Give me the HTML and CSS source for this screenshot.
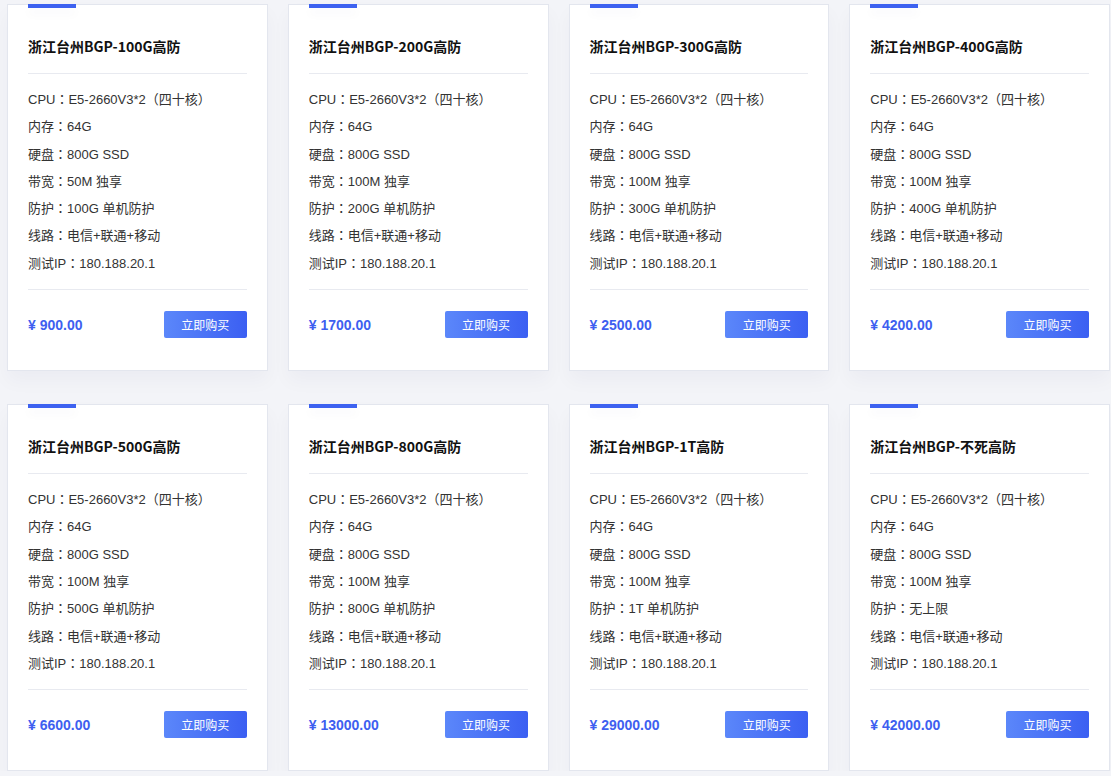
FILE: index.html
```html
<!DOCTYPE html>
<html>
  <head>
    <meta charset="utf-8" />
    <title>浙江台州BGP高防</title>
    <link rel="stylesheet" href="styles.css">
  </head>
  <body>
    <section class="products">
      <article class="card">
        <h3 class="card-title">浙江台州BGP-100G高防</h3>
        <ul class="specs">
          <li>CPU：E5-2660V3*2（四十核）</li>
          <li>内存：64G</li>
          <li>硬盘：800G SSD</li>
          <li>带宽：50M 独享</li>
          <li>防护：100G 单机防护</li>
          <li>线路：电信+联通+移动</li>
          <li>测试IP：180.188.20.1</li>
        </ul>
        <div class="card-foot">
          <span class="price">¥ 900.00</span>
          <a class="buy" href="#">立即购买</a>
        </div>
      </article>

      <article class="card">
        <h3 class="card-title">浙江台州BGP-200G高防</h3>
        <ul class="specs">
          <li>CPU：E5-2660V3*2（四十核）</li>
          <li>内存：64G</li>
          <li>硬盘：800G SSD</li>
          <li>带宽：100M 独享</li>
          <li>防护：200G 单机防护</li>
          <li>线路：电信+联通+移动</li>
          <li>测试IP：180.188.20.1</li>
        </ul>
        <div class="card-foot">
          <span class="price">¥ 1700.00</span>
          <a class="buy" href="#">立即购买</a>
        </div>
      </article>

      <article class="card">
        <h3 class="card-title">浙江台州BGP-300G高防</h3>
        <ul class="specs">
          <li>CPU：E5-2660V3*2（四十核）</li>
          <li>内存：64G</li>
          <li>硬盘：800G SSD</li>
          <li>带宽：100M 独享</li>
          <li>防护：300G 单机防护</li>
          <li>线路：电信+联通+移动</li>
          <li>测试IP：180.188.20.1</li>
        </ul>
        <div class="card-foot">
          <span class="price">¥ 2500.00</span>
          <a class="buy" href="#">立即购买</a>
        </div>
      </article>

      <article class="card">
        <h3 class="card-title">浙江台州BGP-400G高防</h3>
        <ul class="specs">
          <li>CPU：E5-2660V3*2（四十核）</li>
          <li>内存：64G</li>
          <li>硬盘：800G SSD</li>
          <li>带宽：100M 独享</li>
          <li>防护：400G 单机防护</li>
          <li>线路：电信+联通+移动</li>
          <li>测试IP：180.188.20.1</li>
        </ul>
        <div class="card-foot">
          <span class="price">¥ 4200.00</span>
          <a class="buy" href="#">立即购买</a>
        </div>
      </article>

      <article class="card">
        <h3 class="card-title">浙江台州BGP-500G高防</h3>
        <ul class="specs">
          <li>CPU：E5-2660V3*2（四十核）</li>
          <li>内存：64G</li>
          <li>硬盘：800G SSD</li>
          <li>带宽：100M 独享</li>
          <li>防护：500G 单机防护</li>
          <li>线路：电信+联通+移动</li>
          <li>测试IP：180.188.20.1</li>
        </ul>
        <div class="card-foot">
          <span class="price">¥ 6600.00</span>
          <a class="buy" href="#">立即购买</a>
        </div>
      </article>

      <article class="card">
        <h3 class="card-title">浙江台州BGP-800G高防</h3>
        <ul class="specs">
          <li>CPU：E5-2660V3*2（四十核）</li>
          <li>内存：64G</li>
          <li>硬盘：800G SSD</li>
          <li>带宽：100M 独享</li>
          <li>防护：800G 单机防护</li>
          <li>线路：电信+联通+移动</li>
          <li>测试IP：180.188.20.1</li>
        </ul>
        <div class="card-foot">
          <span class="price">¥ 13000.00</span>
          <a class="buy" href="#">立即购买</a>
        </div>
      </article>

      <article class="card">
        <h3 class="card-title">浙江台州BGP-1T高防</h3>
        <ul class="specs">
          <li>CPU：E5-2660V3*2（四十核）</li>
          <li>内存：64G</li>
          <li>硬盘：800G SSD</li>
          <li>带宽：100M 独享</li>
          <li>防护：1T 单机防护</li>
          <li>线路：电信+联通+移动</li>
          <li>测试IP：180.188.20.1</li>
        </ul>
        <div class="card-foot">
          <span class="price">¥ 29000.00</span>
          <a class="buy" href="#">立即购买</a>
        </div>
      </article>

      <article class="card">
        <h3 class="card-title">浙江台州BGP-不死高防</h3>
        <ul class="specs">
          <li>CPU：E5-2660V3*2（四十核）</li>
          <li>内存：64G</li>
          <li>硬盘：800G SSD</li>
          <li>带宽：100M 独享</li>
          <li>防护：无上限</li>
          <li>线路：电信+联通+移动</li>
          <li>测试IP：180.188.20.1</li>
        </ul>
        <div class="card-foot">
          <span class="price">¥ 42000.00</span>
          <a class="buy" href="#">立即购买</a>
        </div>
      </article>
    </section>
  </body>
</html>
```

FILE: styles.css
```css
* {
  box-sizing: border-box;
}

body {
  margin: 0;
  padding: 4px 1px 0 7px;
  font-family: "Liberation Sans", "Noto Sans CJK SC", sans-serif;
  font-size: 13px;
  color: #333;
  background: #f3f4f8;
}

.products {
  display: grid;
  grid-template-columns: repeat(4, 1fr);
  column-gap: 20px;
  row-gap: 33px;
}

.card {
  background: #fff;
  border: 1px solid #e3e6ee;
  padding: 0 20px 32px 20px;
  box-shadow: 0 10px 18px rgba(30, 40, 90, 0.035);
}

.card::before {
  content: "";
  display: block;
  width: 48px;
  height: 4px;
  margin-top: -1px;
  background: #3d62f0;
  box-shadow: 0 6px 10px rgba(40, 50, 90, 0.04);
}

.card-title {
  margin: 0;
  padding: 28px 0 17px 0;
  font-family: "Noto Sans CJK SC", "Liberation Sans", sans-serif;
  font-size: 14px;
  font-weight: bold;
  line-height: 20px;
  color: #111;
  border-bottom: 1px solid #e8eaf0;
}

/* JP face keeps the full-width colon centred */
.specs {
  list-style: none;
  margin: 0;
  padding: 12px 0 12px 0;
  font-family: "Liberation Sans", "Noto Sans CJK JP", sans-serif;
  line-height: 27.3px;
  border-bottom: 1px solid #e8eaf0;
}

.card-foot {
  display: flex;
  align-items: center;
  justify-content: space-between;
  padding-top: 21px;
}

.price {
  font-size: 14px;
  font-weight: bold;
  color: #3e5ff0;
}

.buy {
  display: block;
  width: 83px;
  height: 27px;
  line-height: 27px;
  text-align: center;
  font-family: "Noto Sans CJK SC", sans-serif;
  font-size: 12px;
  color: #fff;
  text-decoration: none;
  border-radius: 2px;
  background: linear-gradient(90deg, #5b87fa, #3b5ff2);
}
```
